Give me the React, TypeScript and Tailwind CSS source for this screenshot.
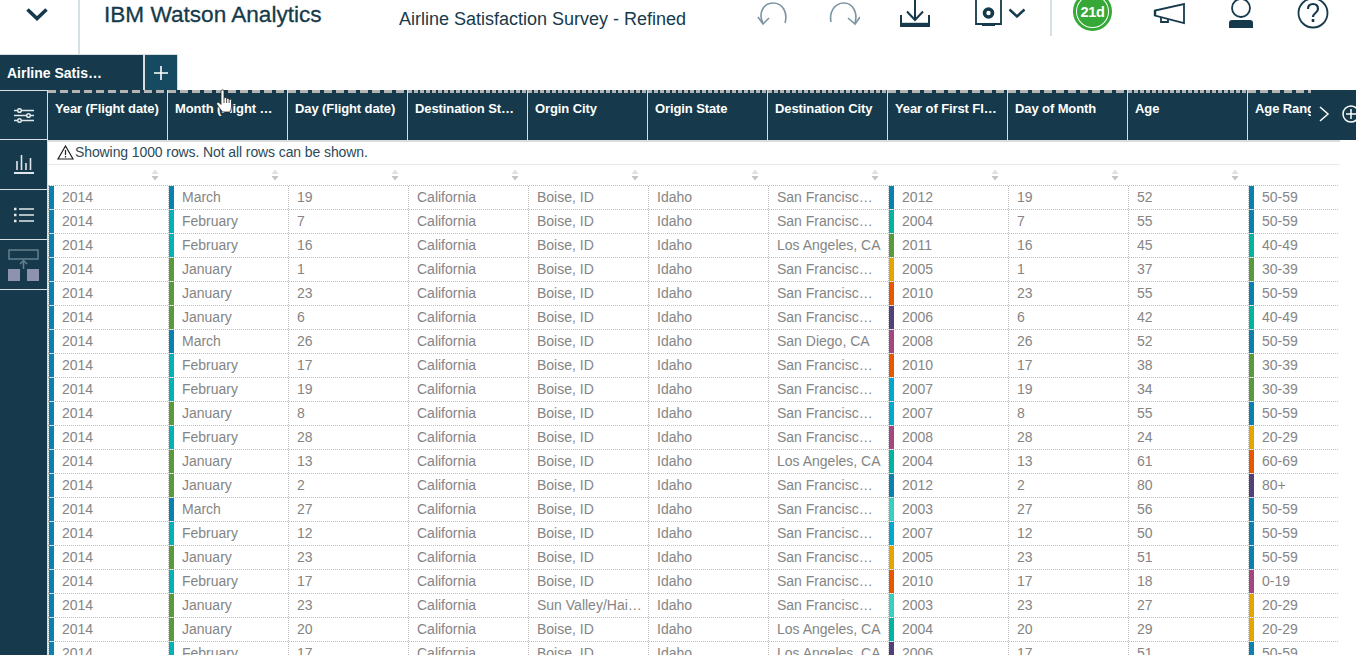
const BLUE = "bg-[#0a82ad]";
const TEAL = "bg-[#00b4a0]";
const GREEN = "bg-[#5a9a3c]";
const YELLOW = "bg-[#e5a500]";
const ORANGE = "bg-[#e85600]";
const PURPLE = "bg-[#524079]";
const MAGENTA = "bg-[#a3487e]";
const CYAN = "bg-[#00a9cc]";
const TURQ = "bg-[#36d0bd]";

const SF = "San Francisco, CA";
const LA = "Los Angeles, CA";

type Row = [string, string, string, string, string, string, string, string, string, string];

const rows: Row[] = [
  ["March", "19", "Boise, ID", SF, "2012", BLUE, "19", "52", "50-59", BLUE],
  ["February", "7", "Boise, ID", SF, "2004", TEAL, "7", "55", "50-59", BLUE],
  ["February", "16", "Boise, ID", LA, "2011", GREEN, "16", "45", "40-49", TEAL],
  ["January", "1", "Boise, ID", SF, "2005", YELLOW, "1", "37", "30-39", GREEN],
  ["January", "23", "Boise, ID", SF, "2010", ORANGE, "23", "55", "50-59", BLUE],
  ["January", "6", "Boise, ID", SF, "2006", PURPLE, "6", "42", "40-49", TEAL],
  ["March", "26", "Boise, ID", "San Diego, CA", "2008", MAGENTA, "26", "52", "50-59", BLUE],
  ["February", "17", "Boise, ID", SF, "2010", ORANGE, "17", "38", "30-39", GREEN],
  ["February", "19", "Boise, ID", SF, "2007", CYAN, "19", "34", "30-39", GREEN],
  ["January", "8", "Boise, ID", SF, "2007", CYAN, "8", "55", "50-59", BLUE],
  ["February", "28", "Boise, ID", SF, "2008", MAGENTA, "28", "24", "20-29", YELLOW],
  ["January", "13", "Boise, ID", LA, "2004", TEAL, "13", "61", "60-69", ORANGE],
  ["January", "2", "Boise, ID", SF, "2012", BLUE, "2", "80", "80+", PURPLE],
  ["March", "27", "Boise, ID", SF, "2003", TURQ, "27", "56", "50-59", BLUE],
  ["February", "12", "Boise, ID", SF, "2007", CYAN, "12", "50", "50-59", BLUE],
  ["January", "23", "Boise, ID", SF, "2005", YELLOW, "23", "51", "50-59", BLUE],
  ["February", "17", "Boise, ID", SF, "2010", ORANGE, "17", "18", "0-19", MAGENTA],
  ["January", "23", "Sun Valley/Hailey, ID", SF, "2003", TURQ, "23", "27", "20-29", YELLOW],
  ["January", "20", "Boise, ID", LA, "2004", TEAL, "20", "29", "20-29", YELLOW],
  ["February", "17", "Boise, ID", LA, "2006", PURPLE, "17", "51", "50-59", BLUE],
];

const LONG = "bg-[repeating-linear-gradient(90deg,#b4b4b4_0_8px,transparent_8px_12px)]";
const SHORT = "bg-[repeating-linear-gradient(90deg,#b4b4b4_0_4px,transparent_4px_6px)]";

const headers: [string, string, string][] = [
  ["Year (Flight date)", LONG, "pr-[6px]"],
  ["Month (Flight date)", LONG, "pr-[9px]"],
  ["Day (Flight date)", LONG, "pr-[6px]"],
  ["Destination State", SHORT, "pr-[9px]"],
  ["Orgin City", SHORT, "pr-[6px]"],
  ["Origin State", SHORT, "pr-[6px]"],
  ["Destination City", SHORT, "pr-[6px]"],
  ["Year of First Flight", LONG, "pr-[9px]"],
  ["Day of Month", LONG, "pr-[6px]"],
  ["Age", SHORT, "pr-[6px]"],
  ["Age Range", LONG, "pr-[6px]"],
];

function Cell({ text, stripe }: { text: string; stripe?: string }) {
  return (
    <div className="flex h-[23px] w-[120px] shrink-0 border-l border-dotted border-[#bdbdbd]">
      {stripe ? <div className={`w-[5px] shrink-0 ${stripe}`} /> : null}
      <div
        className={`min-w-0 flex-1 truncate pl-[8px] text-[14px] leading-[23px] text-[#858585] ${
          text === SF ? "pr-[14px]" : "pr-[5px]"
        }`}
      >
        {text}
      </div>
    </div>
  );
}

function Sort() {
  return (
    <div className="flex h-[20px] w-[120px] shrink-0 items-center justify-end pr-[9px]">
      <svg width="8" height="12" viewBox="0 0 8 12">
        <path d="M4 0.5 7.500 5h-7z" fill="#e0e0e0" />
        <path d="M0.5 7h7L4 11.500z" fill="#c4c4c4" />
      </svg>
    </div>
  );
}

function SideItem({ children, first }: { children: React.ReactNode; first?: boolean }) {
  return (
    <div className={`flex items-center justify-center border-b border-[#d9dfe2] ${first ? "h-[49px]" : "h-[50px]"}`}>
      {children}
    </div>
  );
}

export default function App() {
  return (
    <div className="h-[655px] w-[1356px] overflow-hidden bg-white font-['Liberation_Sans',Arial,sans-serif]">
      {/* top bar */}
      <div className="flex h-[54px] items-start text-[#163a4b]">
        <div className="flex h-[54px] w-[80px] shrink-0 justify-center border-r-2 border-[#d6e1e6] pr-[4px] pt-[8px]">
          <svg width="22" height="13" viewBox="0 0 22 13" fill="none" stroke="#163a4b" strokeWidth="3.600">
            <path d="M1.500 1.500 11 10.500 20.500 1.500" />
          </svg>
        </div>
        <div className="w-[319px] shrink-0 whitespace-nowrap pl-[24px] text-[22.6px] leading-[30px] [-webkit-text-stroke:0.3px_#163a4b]">
          IBM Watson Analytics
        </div>
        <div className="w-[358px] shrink-0 whitespace-nowrap pt-[8px] text-[18px] leading-[22px]">
          Airline Satisfaction Survey - Refined
        </div>
        <svg className="mt-[1px] shrink-0" width="32" height="26" viewBox="0 0 32 26" fill="none" stroke="#7d95a3" strokeWidth="1.600">
          <path d="M6 22C1 13 6 2 16 2s15 10 12 20" />
          <path d="M1 16l5 7 6-6" />
        </svg>
        <svg className="ml-[39px] mt-[1px] shrink-0" width="32" height="26" viewBox="0 0 32 26" fill="none" stroke="#7d95a3" strokeWidth="1.600">
          <path d="M3 21C1 12 6 2 16 2c9 0 14 10 11 20" />
          <path d="M20 17l7 6 5-7" />
        </svg>
        <svg className="ml-[39px] shrink-0" width="32" height="28" viewBox="0 0 32 28" fill="none" stroke="#163a4b" strokeWidth="2">
          <path d="M16 0v20M8 11.500l8 8.500 8-8.500" />
          <path d="M2 15v11h28V15" />
          <path d="M2 24.500h28" strokeWidth="3.400" />
        </svg>
        <svg className="ml-[44px] shrink-0" width="27" height="26" viewBox="0 0 27 26" fill="none" stroke="#163a4b" strokeWidth="1.800">
          <path d="M1 0v24h25V0" />
          <circle cx="13.500" cy="13" r="4" strokeWidth="3.600" />
          <path d="M7 24.500h13" strokeWidth="3" />
        </svg>
        <svg className="ml-[6px] mt-[8px] shrink-0" width="18" height="10" viewBox="0 0 18 10" fill="none" stroke="#163a4b" strokeWidth="2.400">
          <path d="M1.500 1.500 9 8.500 16.500 1.500" />
        </svg>
        <div className="ml-[24px] h-[36px] w-[2px] shrink-0 bg-[#d6e1e6]" />
        <div className="relative ml-[21px] h-[31px] w-[39px] shrink-0 overflow-hidden">
          <svg className="absolute left-0 top-[-8px]" width="39" height="39" viewBox="0 0 39 39" fill="none">
            <circle cx="19.500" cy="19.500" r="18" stroke="#35a838" strokeWidth="3" />
            <circle cx="19.500" cy="19.500" r="15.500" fill="#35a838" />
          </svg>
          <span className="absolute left-0 top-[4px] w-full text-center text-[14.5px] font-bold leading-[16px] tracking-[-0.3px] text-white">
            21d
          </span>
        </div>
        <svg className="ml-[41px] mt-[3px] shrink-0" width="32" height="22" viewBox="0 0 32 22" fill="none" stroke="#163a4b" strokeWidth="1.800">
          <path d="M31 1v19L2 12.500v-5z" />
          <path d="M8 14v5h7v-3" />
          <path d="M2 7v6" strokeWidth="2.400" />
        </svg>
        <svg className="ml-[43px] shrink-0" width="26" height="28" viewBox="0 0 26 28" fill="none" stroke="#163a4b" strokeWidth="1.800">
          <circle cx="13" cy="8" r="9" />
          <path d="M1 28v-5c0-2 1-3 3-3h18c2 0 3 1 3 3v5z" fill="#163a4b" stroke="none" />
        </svg>
        <svg className="ml-[43px] shrink-0" width="32" height="29" viewBox="0 0 32 29" fill="none" stroke="#163a4b" strokeWidth="1.800">
          <circle cx="16" cy="13" r="14.500" />
          <path d="M11 9c0-3 2-5 5-5s5 2 5 5c0 4-5 4-5 8" strokeWidth="2.200" />
          <path d="M16 19v3" strokeWidth="2.600" />
        </svg>
      </div>

      {/* tab strip */}
      <div className="flex h-[36px] items-stretch">
        <div className="flex h-[36px] w-[145px] shrink-0 items-center border-r-2 border-t border-[#d9dddf] bg-[#163a4b] pl-[7px] pt-[2px] text-[14px] font-bold text-white">
          <span className="block w-[97px] truncate">Airline Satisfaction Survey</span>
        </div>
        <div className="flex h-[36px] w-[33px] shrink-0 items-center justify-center border-r border-t border-[#d9dddf] bg-[#164a60]">
          <svg width="14" height="14" viewBox="0 0 14 14" stroke="#ffffff" strokeWidth="1.600">
            <path d="M7 0v14M0 7h14" />
          </svg>
        </div>
      </div>

      {/* main */}
      <div className="flex h-[565px]">
        <div className="h-full w-[48px] shrink-0 border-r border-t border-[#d9dfe2] bg-[#163a4b]">
          <SideItem first>
            <svg width="20" height="15" viewBox="0 0 20 15" fill="none" stroke="#e0e6e9" strokeWidth="1.500">
              <path d="M0 2.500h20M0 7.500h20M0 12.500h20" />
              <circle cx="5.500" cy="2.500" r="1.800" fill="#163a4b" />
              <circle cx="14.500" cy="7.500" r="1.800" fill="#163a4b" />
              <circle cx="5.500" cy="12.500" r="1.800" fill="#163a4b" />
            </svg>
          </SideItem>
          <SideItem>
            <svg width="20" height="19" viewBox="0 0 20 19" fill="none" stroke="#e0e6e9" strokeWidth="1.600">
              <path d="M3 15V6M7.500 15V0M12 15V8M16.500 15V3" />
              <path d="M0 18h20" strokeWidth="2" />
            </svg>
          </SideItem>
          <SideItem>
            <svg width="20" height="16" viewBox="0 0 20 16" fill="none" stroke="#e4e9ec" strokeWidth="1.600">
              <path d="M5 2h15M5 8h15M5 14h15" />
              <path d="M0 2h2.500M0 8h2.500M0 14h2.500" strokeWidth="2.400" />
            </svg>
          </SideItem>
          <SideItem>
            <svg width="32" height="32" viewBox="0 0 32 32" fill="none">
              <rect x="1" y="1" width="29" height="9" stroke="#66808e" strokeWidth="1.500" />
              <path d="M15.500 20v-8M12 15l3.500-3.500L19 15" stroke="#66808e" strokeWidth="1.500" />
              <rect x="0" y="20" width="12" height="12" fill="#8d93ad" />
              <rect x="19" y="20" width="12" height="12" fill="#8d93ad" />
            </svg>
          </SideItem>
        </div>

        <div className="min-w-0 flex-1 overflow-hidden">
          {/* column headers */}
          <div className="flex h-[50px] w-[1308px] overflow-hidden bg-[#163a4b]">
            <div className="flex w-[1263px] shrink-0 overflow-hidden">
              {headers.map(([h, dash, pad]) => (
                <div key={h} className="flex h-[50px] w-[120px] shrink-0 flex-col border-r border-[#d9dfe2]">
                  <div className={`h-[3px] w-full ${dash}`} />
                  <div className={`truncate pl-[7px] pt-[8px] text-[13px] font-bold leading-[16px] tracking-[-0.1px] text-white ${pad}`}>
                    {h}
                  </div>
                </div>
              ))}
            </div>
            <div className="flex h-[50px] flex-1 items-center pb-[2px] pl-[7px]">
              <svg className="shrink-0" width="12" height="18" viewBox="0 0 12 18" fill="none" stroke="#ffffff" strokeWidth="1.500">
                <path d="M2 2l8 7-8 7" />
              </svg>
              <svg className="ml-[11px] shrink-0" width="20" height="20" viewBox="0 0 20 20" fill="none" stroke="#ffffff" strokeWidth="1.500">
                <circle cx="10" cy="10" r="8" />
                <path d="M5 10h10M10 5v10" />
              </svg>
            </div>
          </div>

          <div className="w-[1292px] overflow-hidden">
            <div className="h-[2px] bg-[#dcdcdc]" />
            <div className="flex h-[23px] items-center gap-[1px] border-b border-[#e8e8e8] pb-[2px] pl-[9px] text-[14px] tracking-[-0.1px] text-[#2e4a58]">
              <svg width="17" height="15" viewBox="0 0 17 15" fill="none" stroke="#1c1c1c" strokeWidth="1.200">
                <path d="M8.500 1 16 14H1z" />
                <path d="M8.500 5v5M8.500 11v1.500" />
              </svg>
              <span>Showing 1000 rows. Not all rows can be shown.</span>
            </div>
            <div className="flex overflow-hidden">
              {headers.map(([h]) => (
                <Sort key={h} />
              ))}
            </div>
            {rows.map((r, i) => (
              <div key={i} className="flex w-[1290px] overflow-hidden border-t border-dotted border-[#bdbdbd]">
                <Cell text="2014" stripe={BLUE} />
                <Cell text={r[0]} stripe={r[0] === "March" ? BLUE : r[0] === "February" ? "bg-[#00b1b8]" : GREEN} />
                <Cell text={r[1]} />
                <Cell text="California" />
                <Cell text={r[2]} />
                <Cell text="Idaho" />
                <Cell text={r[3]} />
                <Cell text={r[4]} stripe={r[5]} />
                <Cell text={r[6]} />
                <Cell text={r[7]} />
                <Cell text={r[8]} stripe={r[9]} />
              </div>
            ))}
          </div>
        </div>
      </div>

      {/* hand cursor */}
      <svg className="absolute left-[216px] top-[89px]" width="18" height="25" viewBox="0 0 18 25" fill="#ffffff" stroke="#222222" strokeWidth="0.800">
        <path d="M5 2c0-1.600 3-1.600 3 0v7.500c0-1.400 2.600-1.400 2.600 0v.8c0-1.300 2.500-1.300 2.500 0v.8c0-1.200 2.400-1.200 2.400.2v6.700c0 2-.8 3.500-1.500 5H6.500C5 21 3 18.500 1 15.500c-1-1.600.8-3 2.200-1.800L5 15.500z" />
        <path d="M8 9.500V14M10.600 10.300V14M13.100 11.100V14" />
      </svg>
    </div>
  );
}
